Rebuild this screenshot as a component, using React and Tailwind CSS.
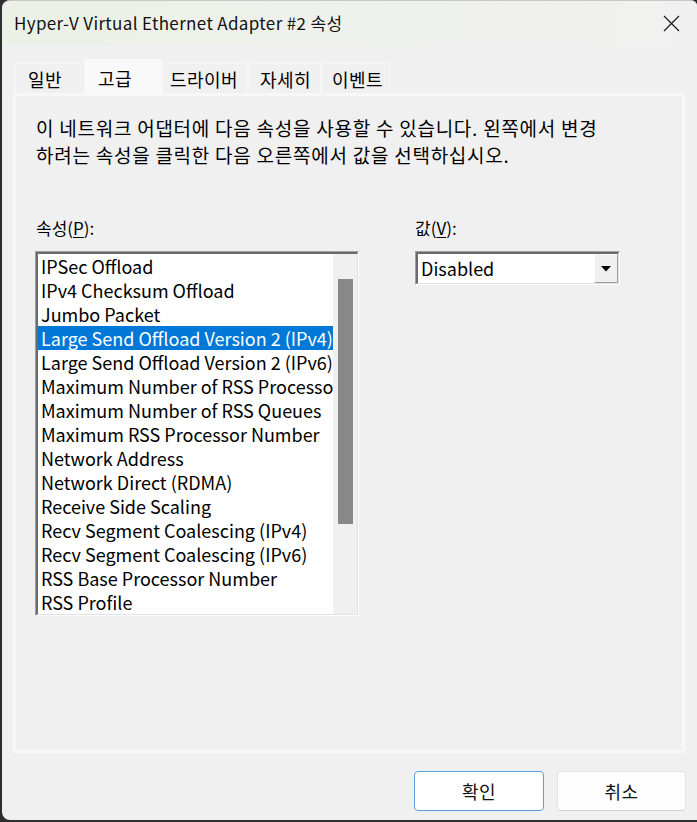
import React from "react";

const items = [
  "IPSec Offload",
  "IPv4 Checksum Offload",
  "Jumbo Packet",
  "Large Send Offload Version 2 (IPv4)",
  "Large Send Offload Version 2 (IPv6)",
  "Maximum Number of RSS Processors",
  "Maximum Number of RSS Queues",
  "Maximum RSS Processor Number",
  "Network Address",
  "Network Direct (RDMA)",
  "Receive Side Scaling",
  "Recv Segment Coalescing (IPv4)",
  "Recv Segment Coalescing (IPv6)",
  "RSS Base Processor Number",
  "RSS Profile",
];

function Tab({ label, selected, w, pl }) {
  if (selected) {
    return (
      <div
        className={`relative z-10 -mb-[3px] flex h-[37px] items-start pt-[6px] bg-[#f9f9f9] border-t border-l border-r border-[#f9f9f9] ${w} ${pl}`}
      >
        <span className="leading-[24px]">{label}</span>
      </div>
    );
  }
  return (
    <div
      className={`flex h-[31px] items-start pt-[4px] border-t border-l border-r border-[#f7f7f7] ${w} ${pl}`}
    >
      <span className="leading-[24px]">{label}</span>
    </div>
  );
}

export default function App() {
  return (
    <div className="w-[697px] h-[822px] bg-[#2e2e2e] overflow-hidden font-['Noto_Sans_CJK_KR',sans-serif] text-[#000]">
      <div className="ml-[2px] w-[695px] h-[820px] rounded-l-[8px] rounded-tr-[6px] bg-[#f0f0f0] border-t border-[#c8c8c8] flex flex-col overflow-hidden">
        {/* Title bar */}
        <div className="h-[44px] flex items-center justify-between pl-[12px] pr-[17px] bg-gradient-to-r from-[#ebf1e6] via-[#eff1ec] to-[#f0f0f0]">
          <span className="text-[17px] leading-[24px] tracking-[0.35px] text-[#111]">Hyper-V Virtual Ethernet Adapter #2 속성</span>
          <svg width="17" height="17" viewBox="0 0 17 17">
            <path d="M1 1 L16 16 M16 1 L1 16" stroke="#1a1a1a" strokeWidth="1.2" fill="none" />
          </svg>
        </div>

        {/* Tabs */}
        <div className="mt-[14px] pl-[13px] flex items-end h-[34px] text-[18px] tracking-[0.4px]">
          <Tab label="일반" w="w-[70px]" pl="pl-[12px]" />
          <Tab label="고급" selected w="w-[77px]" pl="pl-[12px]" />
          <div className="w-[1px]" />
          <Tab label="드라이버" w="w-[85px]" pl="pl-[6px]" />
          <div className="w-[1px]" />
          <Tab label="자세히" w="w-[72px]" pl="pl-[10px]" />
          <Tab label="이벤트" w="w-[69px]" pl="pl-[10px]" />
        </div>

        {/* Panel */}
        <div className="ml-[11px] w-[672px] h-[660px] border-[3px] border-[#f7f7f7] bg-[#f0f0f0] pl-[19px] pt-[18px]">
          <p className="text-[19px] leading-[27px] tracking-[0.75px] pl-[1px]">
            이 네트워크 어댑터에 다음 속성을 사용할 수 있습니다. 왼쪽에서 변경
            <br />
            하려는 속성을 클릭한 다음 오른쪽에서 값을 선택하십시오.
          </p>

          <div className="mt-[48px] flex gap-[56px]">
            {/* Left column */}
            <div className="w-[324px]">
              <div className="text-[17px] leading-[24px] pl-[1px]">
                속성(<u className="underline-offset-2">P</u>):
              </div>
              <div className="mt-[11px] h-[365px] border-t border-l border-[#a0a0a0] border-r border-b border-r-[#fdfdfd] border-b-[#fdfdfd]">
                <div className="h-full flex border-t-2 border-l-2 border-[#6a6a6a] border-r border-b border-r-[#e3e3e3] border-b-[#e3e3e3]">
                  <div className="w-[295px] h-full bg-white overflow-hidden">
                    {items.map((it, i) => (
                      <div
                        key={it}
                        className={`h-[24px] leading-[24px] pl-[3px] text-[18px] whitespace-nowrap overflow-hidden ${
                          i === 3 ? "bg-[#0078d7] text-white" : ""
                        }`}
                      >
                        {it}
                      </div>
                    ))}
                  </div>
                  <div className="flex-1 h-full bg-[#f0f0f0] pt-[25px] flex justify-center">
                    <div className="w-[15px] h-[245px] bg-[#888888]" />
                  </div>
                </div>
              </div>
            </div>

            {/* Right column */}
            <div className="w-[205px]">
              <div className="text-[17px] leading-[24px]">
                값(<u className="underline-offset-2">V</u>):
              </div>
              <div className="mt-[11px] h-[34px] border-t border-l border-[#a0a0a0] border-r border-b border-r-[#fdfdfd] border-b-[#fdfdfd]">
                <div className="h-full flex bg-white border-t-2 border-l-2 border-[#6a6a6a] border-r border-b border-r-[#e3e3e3] border-b-[#e3e3e3]">
                  <div className="flex-1 pl-[3px] text-[18px] leading-[29px]">Disabled</div>
                  <div className="w-[24px] h-full bg-[#f0f0f0] border-l border-t border-[#fafafa] border-r border-b border-r-[#a0a0a0] border-b-[#a0a0a0] flex items-center justify-center">
                    <svg width="10" height="6" viewBox="0 0 10 6">
                      <path d="M0 0 L10 0 L5 5.5 Z" fill="#000" />
                    </svg>
                  </div>
                </div>
              </div>
            </div>
          </div>
        </div>

        {/* Buttons */}
        <div className="mt-[18px] flex justify-end gap-[13px] pr-[11px]">
          <button className="w-[130px] h-[40px] rounded-[4px] bg-white border border-[#5aa0e0] text-[18px] leading-[24px] tracking-[0.5px] text-[#111]">
            확인
          </button>
          <button className="w-[129px] h-[40px] rounded-[4px] bg-[#fdfdfd] border border-[#e3e3e3] border-b-[#d0d0d0] text-[18px] leading-[24px] tracking-[0.5px] text-[#111]">
            취소
          </button>
        </div>
      </div>
    </div>
  );
}
